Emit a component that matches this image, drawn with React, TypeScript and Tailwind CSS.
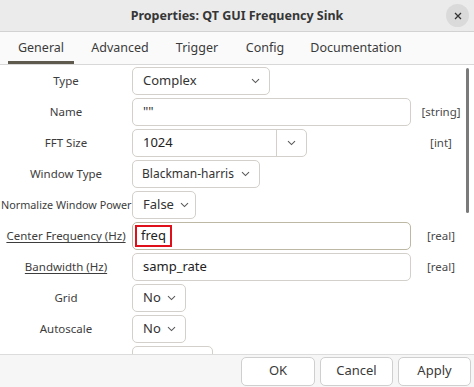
import React from "react";

const font = { fontFamily: '"Noto Sans", "Open Sans", sans-serif' };

function Chevron({ className = "" }: { className?: string }) {
  return (
    <svg width="9" height="6" viewBox="0 0 9 6" className={`shrink-0 ${className}`}>
      <path d="M1 1.2 L4.5 4.6 L8 1.2" fill="none" stroke="#5a5a5a" strokeWidth="1.1" />
    </svg>
  );
}

function Row({ label, children, type, labelClass = "text-[11.5px]" }: { label: string; children: React.ReactNode; type?: string; labelClass?: string }) {
  return (
    <div className="flex h-[28px] items-center shrink-0">
      <div className={`w-[132px] shrink-0 text-center whitespace-nowrap text-[#3d3d3d] ${labelClass}`}>{label}</div>
      <div className="w-[279px] shrink-0 h-full flex">{children}</div>
      <div className="w-[60px] text-center text-[11.5px] text-[#4a4a4a]">{type}</div>
    </div>
  );
}

function Combo({ text, w, justify = false, size = "text-[13px]", pl = "pl-[10px]" }: { text: string; w: string; justify?: boolean; size?: string; pl?: string }) {
  return (
    <div className={`${w} h-full border border-[#d3cfca] rounded-[5px] bg-white flex items-center ${pl} pr-[9px] whitespace-nowrap ${justify ? "justify-between" : "gap-[6px]"}`}>
      <span className={`${size} text-[#333]`}>{text}</span>
      <Chevron />
    </div>
  );
}

export default function App() {
  return (
    <div className="w-[474px] h-[387px] overflow-hidden bg-white flex flex-col relative" style={font}>
      {/* title bar */}
      <div className="h-[32px] shrink-0 bg-[#ebebeb] border-b border-[#d2d2d2] flex items-center justify-center relative pt-[1px]">
        <span className="text-[12.5px] font-bold text-[#363636]">Properties: QT GUI Frequency Sink</span>
        <div className="absolute right-[5px] top-[4px] w-[23px] h-[23px] rounded-full bg-[#dadada] flex items-center justify-center">
          <svg width="8" height="8" viewBox="0 0 8 8">
            <path d="M1 1 L7 7 M7 1 L1 7" stroke="#333" strokeWidth="1.3" />
          </svg>
        </div>
      </div>
      {/* tabs */}
      <div className="h-[33px] shrink-0 bg-[#fafafa] border-b border-[#d8d8d8] flex items-end pl-[8px] text-[12.5px] text-[#3a3a3a] whitespace-nowrap">
        <div className="w-[66px] h-full flex items-center justify-center border-b-[3px] border-[#5e5a4e] pt-[3px]">General</div>
        <div className="w-[64px] ml-[14px] h-full flex items-center justify-center">Advanced</div>
        <div className="w-[50px] ml-[20px] h-full flex items-center justify-center">Trigger</div>
        <div className="w-[46px] ml-[20px] h-full flex items-center justify-center">Config</div>
        <div className="w-[100px] ml-[18px] h-full flex items-center justify-center">Documentation</div>
      </div>
      {/* content */}
      <div className="flex-1 relative overflow-hidden pt-[2px] flex flex-col gap-[3px]">
        <div className="absolute right-[5px] top-[3px] w-[3px] h-[145px] bg-[#7a7a7a] rounded-full" />
        <Row label="Type">
          <Combo text="Complex" w="w-[138px]" justify />
        </Row>
        <Row label="Name" type="[string]">
          <div className="w-full h-full border border-[#d3cfca] rounded-[5px] bg-white flex items-center pl-[10px] text-[13px] text-[#333]">""</div>
        </Row>
        <Row label="FFT Size" type="[int]">
          <div className="w-[175px] h-full border border-[#d3cfca] rounded-[5px] bg-white flex">
            <div className="flex-1 flex items-center pl-[10px] text-[13px] text-[#222]">1024</div>
            <div className="w-[30px] border-l border-[#d3cfca] flex items-center justify-center">
              <Chevron />
            </div>
          </div>
        </Row>
        <Row label="Window Type">
          <Combo text="Blackman-harris" w="w-[128px]" justify size="text-[12px]" pl="pl-[9px]" />
        </Row>
        <Row label="Normalize Window Power" labelClass="text-left pl-[1px] text-[10.8px]">
          <Combo text="False" w="w-[64px]" />
        </Row>
        <Row label="Center Frequency (Hz)" type="[real]" labelClass="text-[11.5px] text-[#2b4fd8] underline underline-offset-2">
          <div className="w-full h-full border border-[#bdb8a3] rounded-[5px] bg-white flex items-center pl-[2px]">
            <div className="h-[22px] border-2 border-[#e0101a] flex items-center px-[4px] text-[13px] text-[#222]">freq</div>
          </div>
        </Row>
        <Row label="Bandwidth (Hz)" type="[real]" labelClass="text-[11.5px] underline underline-offset-2">
          <div className="w-full h-full border border-[#d3cfca] rounded-[5px] bg-white flex items-center pl-[10px] text-[13px] text-[#222]">samp_rate</div>
        </Row>
        <Row label="Grid">
          <Combo text="No" w="w-[54px]" />
        </Row>
        <Row label="Autoscale">
          <Combo text="No" w="w-[54px]" />
        </Row>
        <Row label="">
          <div className="w-[81px] h-full border border-[#d3cfca] rounded-[5px] bg-white" />
        </Row>
      </div>
      {/* footer */}
      <div className="h-[33px] shrink-0 bg-[#f6f6f6] border-t border-[#dcdcdc] flex items-center justify-end gap-[5px] pr-[3px] text-[13px] text-[#3a3a3a]">
        <div className="w-[74px] h-[29px] border border-[#cfcfcf] rounded-[5px] bg-white flex items-center justify-center">OK</div>
        <div className="w-[73px] h-[29px] border border-[#cfcfcf] rounded-[5px] bg-white flex items-center justify-center">Cancel</div>
        <div className="w-[73px] h-[29px] border border-[#cfcfcf] rounded-[5px] bg-white flex items-center justify-center">Apply</div>
      </div>
    </div>
  );
}
